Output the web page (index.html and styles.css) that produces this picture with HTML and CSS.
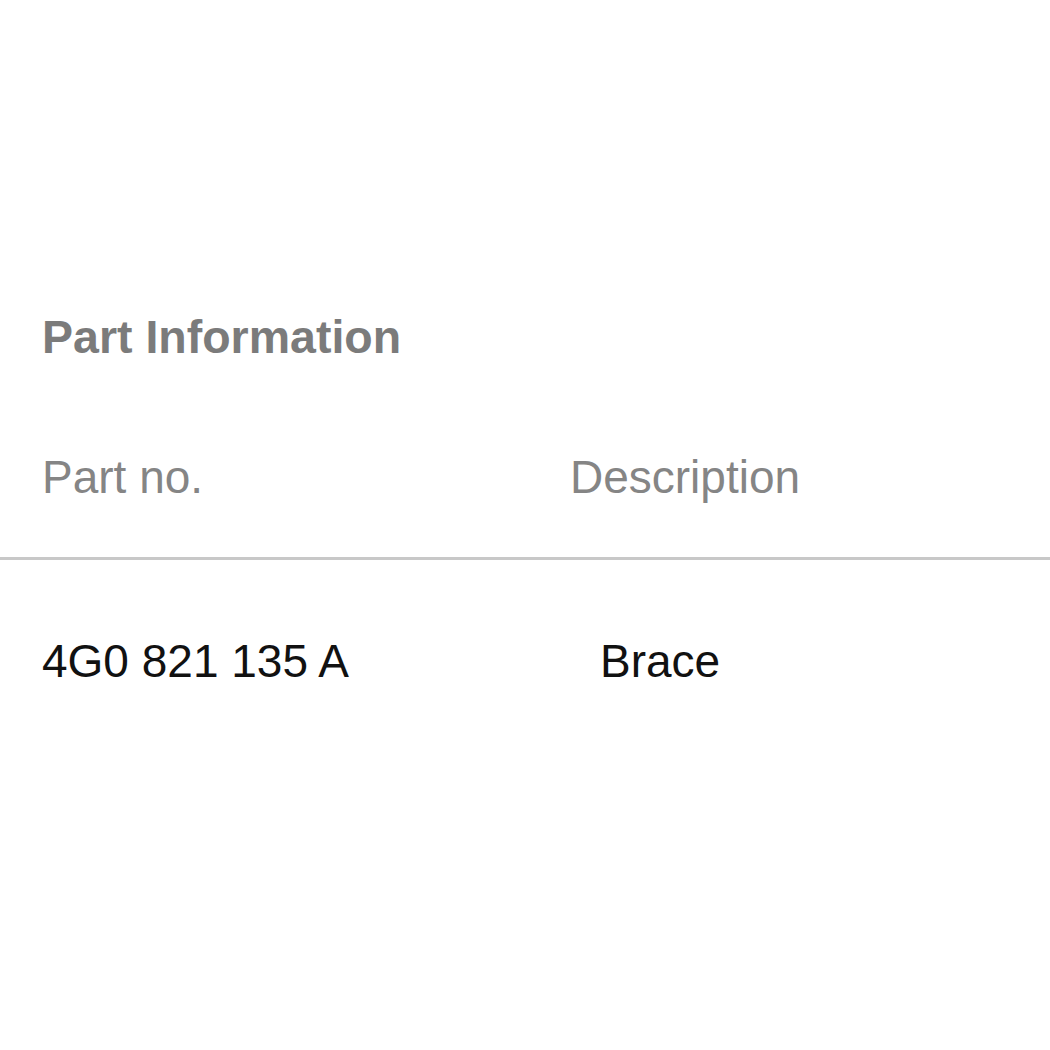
FILE: index.html
```html
<!DOCTYPE html>
<html lang="en">
<head>
  <meta charset="UTF-8">
  <title>Part Information</title>
  <link rel="stylesheet" href="styles.css">
</head>
<body>
  <h2 class="section-title">Part Information</h2>

  <div class="parts">
    <div class="row head">
      <div class="cell col-no">Part no.</div>
      <div class="cell col-desc">Description</div>
    </div>
    <div class="row item">
      <div class="cell col-no">4G0 821 135 A</div>
      <div class="cell col-desc">Brace</div>
    </div>
  </div>
</body>
</html>
```

FILE: styles.css
```css
body {
  margin: 0;
  background: #fff;
  font-family: "Liberation Sans", Arial, sans-serif;
  color: #000;
}
.section-title {
  margin: 0;
  padding: 309px 42px 0;
  font-size: 46.5px;
  line-height: 56px;
  font-weight: bold;
  color: #7b7b7b;
}
.parts {
  margin-top: 84px;
}
.row {
  display: grid;
  grid-template-columns: 528px 1fr;
  padding: 0 42px;
  line-height: 56px;
}
.head {
  font-size: 46px;
  color: #858585;
  padding-bottom: 52px;
  border-bottom: 3px solid #c8c8c8;
}
.item {
  padding-top: 73px;
  font-size: 46px;
  color: #111;
}
.item .col-desc {
  padding-left: 30px;
}
```
